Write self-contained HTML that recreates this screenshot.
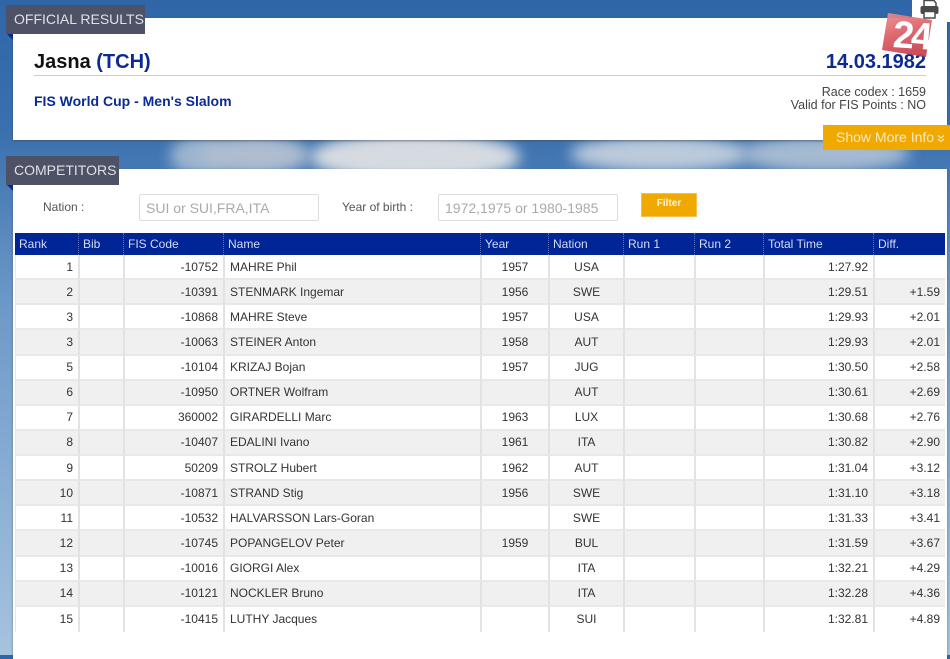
<!DOCTYPE html>
<html><head><meta charset="utf-8">
<style>
html,body{margin:0;padding:0}
body{width:950px;height:655px;position:relative;overflow:hidden;font-family:"Liberation Sans",sans-serif;background:linear-gradient(180deg,#2f66a8 0,#3a70ae 130px,#6c98c8 300px,#a6c3df 655px)}
.a{position:absolute}
.cl{position:absolute;filter:blur(7px);border-radius:50%}
.panel{position:absolute;background:#fff;box-shadow:0 1px 2px rgba(60,60,60,.55)}
.tab{position:absolute;left:6px;background:#4e5266;color:#dfe0e6;font-size:14px;height:29px;line-height:29px;padding-left:8px;box-sizing:border-box}
.tri{position:absolute;left:7px;width:0;height:0;border-top:6px solid #0a2a8c;border-left:6px solid transparent}
table{position:absolute;left:15px;top:233px;width:930px;border-collapse:separate;border-spacing:0;table-layout:fixed;font-size:12px;color:#333}
th{background:#002596;color:#d5dbf0;font-weight:normal;text-align:left;height:22px;padding:0 0 0 4px;border-left:1px dotted #5a72c0;box-sizing:border-box;font-size:12px}
th:first-child{border-left:0}
td{height:25.14px;box-sizing:border-box;padding:0 5px;border-left:2px solid #e2e2e2;border-bottom:2px solid #e8e8e8;white-space:nowrap;overflow:hidden}
td:first-child{border-left:1px solid #e8e8e8}
tr.e td{background:#f0f0f0}
.r{text-align:right}.c{text-align:center}
tr:last-child td{border-bottom:0}
input{position:absolute;box-sizing:border-box;height:27px;border:1px solid #ddd;border-radius:2px;font:14px "Liberation Sans",sans-serif;padding:0 6px;background:#fff}
input::placeholder{color:#aaa;opacity:1}
</style></head><body>

<div class="cl" style="left:170px;top:136px;width:60px;height:40px;background:#9db5cf"></div>
<div class="cl" style="left:200px;top:135px;width:110px;height:40px;background:#aebdd0"></div>
<div class="cl" style="left:310px;top:132px;width:210px;height:50px;background:#d6dbe1"></div>
<div class="cl" style="left:570px;top:136px;width:180px;height:36px;background:#bccbdb"></div>
<div class="cl" style="left:740px;top:136px;width:170px;height:36px;background:#a6bbd2"></div>

<div class="panel" style="left:13px;top:18px;width:934px;height:122px"></div>
<div class="panel" style="left:13px;top:169px;width:934px;height:490px"></div>

<div class="a" style="left:912px;top:0;width:38px;height:22px;background:#fff;border-radius:0 0 0 6px"></div>
<svg class="a" style="left:919px;top:0" width="22" height="20" viewBox="0 0 22 20"><path d="M5 6V0.5H15L17 3V6" fill="none" stroke="#4a4a4a" stroke-width="1.5"/><rect x="1.5" y="6" width="18" height="8" rx="2" fill="#4a4a4a"/><rect x="5" y="11.5" width="11" height="6.5" fill="#fff" stroke="#4a4a4a" stroke-width="1.5"/></svg>

<div class="tri" style="top:34px"></div>
<div class="tab" style="top:5px;width:139px">OFFICIAL RESULTS</div>

<div class="a" style="left:34px;top:50px;font-size:20px;font-weight:bold;color:#111;line-height:24px;white-space:nowrap">Jasna <span style="color:#0b2a94">(TCH)</span></div>
<div class="a" style="right:24px;top:50px;font-size:20px;font-weight:bold;color:#0b2a94;line-height:24px">14.03.1982</div>
<div class="a" style="left:34px;top:75px;width:892px;height:1px;background:#fcc96a"></div>
<div class="a" style="left:34px;top:93px;font-size:14px;font-weight:bold;color:#0b2a94;line-height:17px;white-space:nowrap">FIS World Cup - Men's Slalom</div>
<div class="a" style="right:24px;top:86px;font-size:12.5px;color:#444;line-height:12.5px;text-align:right;white-space:nowrap">Race codex : 1659<br>Valid for FIS Points : NO</div>

<svg class="a" style="left:882px;top:12px" width="52" height="46" viewBox="0 0 52 46"><defs><linearGradient id="g" x1="0" y1="0" x2="0.3" y2="1"><stop offset="0" stop-color="#ea8f94"/><stop offset=".5" stop-color="#dd5f66"/><stop offset="1" stop-color="#c9424c"/></linearGradient></defs><path d="M6 1L50 8L44 45L0 38Z" fill="url(#g)" opacity=".93"/><text x="11" y="36" font-family="Liberation Sans,sans-serif" font-size="38" font-weight="bold" fill="#fff" letter-spacing="-3" transform="rotate(4 25 25)">24</text></svg>

<div class="a" style="left:823px;top:125px;width:127px;height:25px;background:#f0a900;color:#fde9bd;font-size:14px;line-height:25px;padding-left:13px;box-sizing:border-box;white-space:nowrap">Show More Info</div>
<svg class="a" style="left:937px;top:134px" width="8" height="9" viewBox="0 0 8 9"><path d="M1 1.5L4 4L7 1.5M1 5L4 7.5L7 5" fill="none" stroke="#fde9bd" stroke-width="1.2"/></svg>

<div class="tri" style="top:185px"></div>
<div class="tab" style="top:156px;width:113px">COMPETITORS</div>

<div class="a" style="left:43px;top:200px;font-size:12px;line-height:15px;color:#555">Nation :</div>
<input class="a" style="left:139px;top:194px;width:180px" placeholder="SUI or SUI,FRA,ITA">
<div class="a" style="left:342px;top:200px;font-size:12px;line-height:15px;color:#555;white-space:nowrap">Year of birth :</div>
<input class="a" style="left:438px;top:194px;width:180px" placeholder="1972,1975 or 1980-1985">
<div class="a" style="left:641px;top:193px;width:56px;height:24px;background:#f0a900;border:1px solid #f5c04f;box-sizing:border-box;color:#fdf3dc;font-size:10px;font-weight:bold;line-height:20px;text-align:center">Filter</div>

<table>
<colgroup><col style="width:63px"><col style="width:45px"><col style="width:100px"><col style="width:257px"><col style="width:68px"><col style="width:75px"><col style="width:71px"><col style="width:69px"><col style="width:110px"><col style="width:72px"></colgroup>
<tr><th>Rank</th><th>Bib</th><th>FIS Code</th><th>Name</th><th>Year</th><th>Nation</th><th>Run 1</th><th>Run 2</th><th>Total Time</th><th>Diff.</th></tr>
<tr><td class="r">1</td><td></td><td class="r">-10752</td><td>MAHRE Phil</td><td class="c">1957</td><td class="c">USA</td><td></td><td></td><td class="r">1:27.92</td><td class="r"></td></tr>
<tr class="e"><td class="r">2</td><td></td><td class="r">-10391</td><td>STENMARK Ingemar</td><td class="c">1956</td><td class="c">SWE</td><td></td><td></td><td class="r">1:29.51</td><td class="r">+1.59</td></tr>
<tr><td class="r">3</td><td></td><td class="r">-10868</td><td>MAHRE Steve</td><td class="c">1957</td><td class="c">USA</td><td></td><td></td><td class="r">1:29.93</td><td class="r">+2.01</td></tr>
<tr class="e"><td class="r">3</td><td></td><td class="r">-10063</td><td>STEINER Anton</td><td class="c">1958</td><td class="c">AUT</td><td></td><td></td><td class="r">1:29.93</td><td class="r">+2.01</td></tr>
<tr><td class="r">5</td><td></td><td class="r">-10104</td><td>KRIZAJ Bojan</td><td class="c">1957</td><td class="c">JUG</td><td></td><td></td><td class="r">1:30.50</td><td class="r">+2.58</td></tr>
<tr class="e"><td class="r">6</td><td></td><td class="r">-10950</td><td>ORTNER Wolfram</td><td class="c"></td><td class="c">AUT</td><td></td><td></td><td class="r">1:30.61</td><td class="r">+2.69</td></tr>
<tr><td class="r">7</td><td></td><td class="r">360002</td><td>GIRARDELLI Marc</td><td class="c">1963</td><td class="c">LUX</td><td></td><td></td><td class="r">1:30.68</td><td class="r">+2.76</td></tr>
<tr class="e"><td class="r">8</td><td></td><td class="r">-10407</td><td>EDALINI Ivano</td><td class="c">1961</td><td class="c">ITA</td><td></td><td></td><td class="r">1:30.82</td><td class="r">+2.90</td></tr>
<tr><td class="r">9</td><td></td><td class="r">50209</td><td>STROLZ Hubert</td><td class="c">1962</td><td class="c">AUT</td><td></td><td></td><td class="r">1:31.04</td><td class="r">+3.12</td></tr>
<tr class="e"><td class="r">10</td><td></td><td class="r">-10871</td><td>STRAND Stig</td><td class="c">1956</td><td class="c">SWE</td><td></td><td></td><td class="r">1:31.10</td><td class="r">+3.18</td></tr>
<tr><td class="r">11</td><td></td><td class="r">-10532</td><td>HALVARSSON Lars-Goran</td><td class="c"></td><td class="c">SWE</td><td></td><td></td><td class="r">1:31.33</td><td class="r">+3.41</td></tr>
<tr class="e"><td class="r">12</td><td></td><td class="r">-10745</td><td>POPANGELOV Peter</td><td class="c">1959</td><td class="c">BUL</td><td></td><td></td><td class="r">1:31.59</td><td class="r">+3.67</td></tr>
<tr><td class="r">13</td><td></td><td class="r">-10016</td><td>GIORGI Alex</td><td class="c"></td><td class="c">ITA</td><td></td><td></td><td class="r">1:32.21</td><td class="r">+4.29</td></tr>
<tr class="e"><td class="r">14</td><td></td><td class="r">-10121</td><td>NOCKLER Bruno</td><td class="c"></td><td class="c">ITA</td><td></td><td></td><td class="r">1:32.28</td><td class="r">+4.36</td></tr>
<tr><td class="r">15</td><td></td><td class="r">-10415</td><td>LUTHY Jacques</td><td class="c"></td><td class="c">SUI</td><td></td><td></td><td class="r">1:32.81</td><td class="r">+4.89</td></tr>
</table>
</body></html>
